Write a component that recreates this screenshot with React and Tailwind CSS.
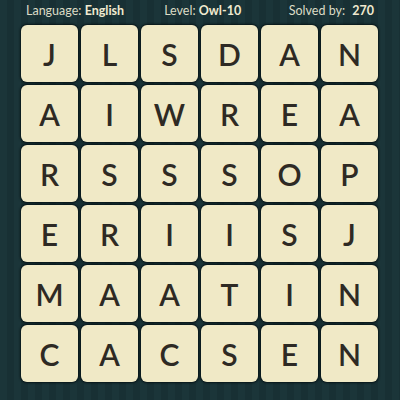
import React from "react";

const rows = ["JLSDAN", "AIWREA", "RSSSOP", "ERIISJ", "MAATIN", "CACSEN"];

export default function App() {
  return (
    <div className="h-[400px] w-[400px] overflow-hidden bg-[#1a3337] bg-[repeating-linear-gradient(90deg,#1b3539_0px,#1b3539_7px,#183034_7px,#183034_14px)] font-['Lato',sans-serif]">
      <div className="flex h-[23px] items-center pl-[26px] pr-[26px] text-[12.5px] text-[#dcdcc6]">
        <span>
          Language: <b className="font-bold text-[#f0ead0]">English</b>
        </span>
        <span className="ml-[40px]">
          Level: <b className="font-bold text-[#f0ead0]">Owl-10</b>
        </span>
        <span className="ml-auto">
          Solved by: <b className="ml-1 font-bold text-[#f0ead0]">270</b>
        </span>
      </div>
      <div className="mt-[2px] grid w-fit grid-cols-6 gap-[3px] pl-[21px]">
        {rows.join("").split("").map((ch, i) => (
          <div
            key={i}
            className="flex h-[57px] w-[57px] items-center justify-center rounded-[6px] bg-[#f0e9c6] text-[30px] font-semibold leading-none text-[#2e2a24] shadow-[0_0_2px_1px_rgba(5,18,20,0.9)]"
          >
            {ch}
          </div>
        ))}
      </div>
    </div>
  );
}
